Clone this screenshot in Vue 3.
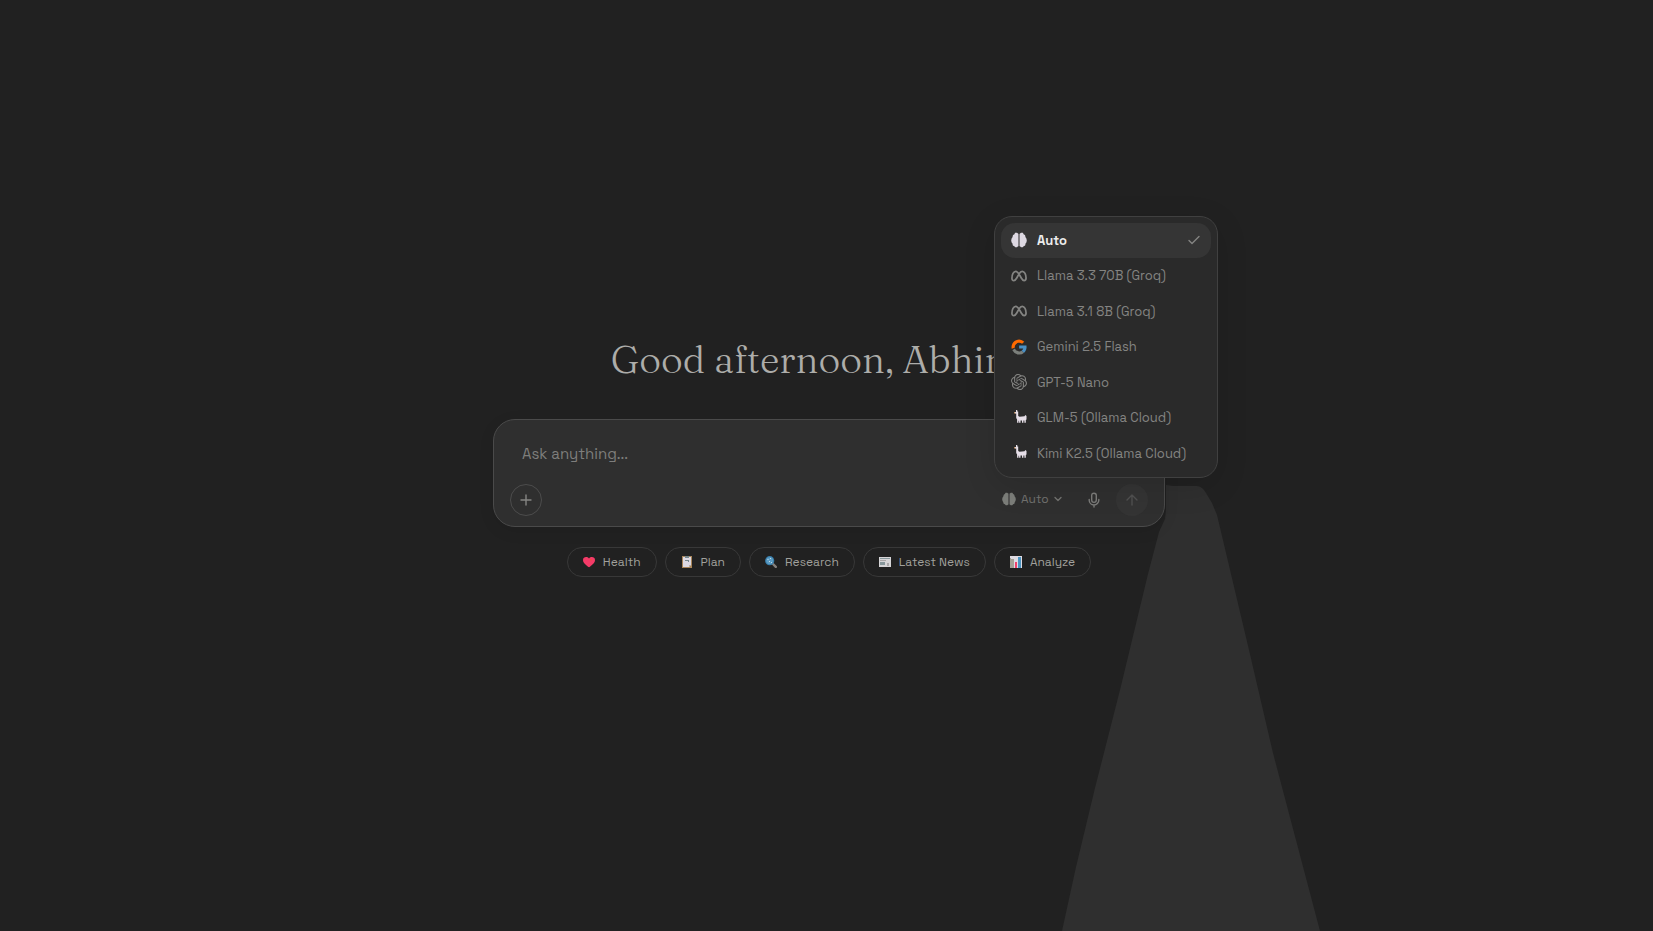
<template>
  <main class="page">
    <!-- icon sprite -->
    <svg class="sprite" aria-hidden="true">
      <symbol id="i-brain" viewBox="0 0 24 24">
        <path d="M10.500 2.400L9 1.200H6.200L4.800 3.600 3 4.600 2.200 7.800.900 9.600.300 12.600.900 15.600 2 17 2.800 20.200 5 21.200 6.400 22.800H9L10.500 21.400z" />
        <path d="M13.500 2.400L15 1.200H17.800L19.200 3.600 21 4.600 21.800 7.800 23.100 9.600 23.700 12.600 23.100 15.600 22 17 21.200 20.200 19 21.200 17.600 22.800H15L13.500 21.400z" />
        <path fill-opacity="0.45" d="M10.500 2.500h3v19h-3z" />
      </symbol>
      <symbol id="i-meta" viewBox="0 0 24 24">
        <path fill="none" stroke="currentColor" stroke-width="2.600" d="M4.400 18.900c-2 0-3-1.300-3-3.700C1.400 9.900 3.700 4.900 7.100 4.900c2 0 3.400 1.500 4.900 4.100l3.400 6c1.400 2.500 2.400 3.900 4.200 3.900 2 0 3-1.400 3-3.900 0-5.200-2.300-10.100-5.700-10.100-2 0-3.500 1.600-4.900 4.100l-3.400 6c-1.400 2.500-2.500 3.900-4.200 3.900z" />
      </symbol>
      <symbol id="i-google" viewBox="0 0 24 24">
        <path fill="#ff6a00" d="M2 7.100A11.300 11.300 0 0 1 19.900 4L16.600 7.200A6.700 6.700 0 0 0 6 9.900L5.500 13 1 14.500A11.300 11.300 0 0 1 2 7.100z" />
        <path fill="#7b7f7b" d="M2 17A11.300 11.300 0 0 0 19.700 20.500L15.900 17.500A6.800 6.800 0 0 1 5.900 14.100z" />
        <path fill="#4a90c4" d="M12.200 9.900H23.200C23.900 14.500 22.600 18 19.700 20.500L15.900 17.500C17.200 16.600 18 15.600 18.300 14.300H12.200z" />
      </symbol>
      <symbol id="i-openai" viewBox="0 0 24 24">
        <path d="M22.2819 9.8211a5.9847 5.9847 0 0 0-.5157-4.9108 6.0462 6.0462 0 0 0-6.5098-2.9A6.0651 6.0651 0 0 0 4.9807 4.1818a5.9847 5.9847 0 0 0-3.9977 2.9 6.0462 6.0462 0 0 0 .7427 7.0966 5.98 5.98 0 0 0 .511 4.9107 6.051 6.051 0 0 0 6.5146 2.9001A5.9847 5.9847 0 0 0 13.2599 24a6.0557 6.0557 0 0 0 5.7718-4.2058 5.9894 5.9894 0 0 0 3.9977-2.9001 6.0557 6.0557 0 0 0-.7475-7.073zm-9.022 12.6081a4.4755 4.4755 0 0 1-2.8764-1.0408l.1419-.0804 4.7783-2.7582a.7948.7948 0 0 0 .3927-.6813v-6.7369l2.02 1.1686a.071.071 0 0 1 .038.052v5.5826a4.504 4.504 0 0 1-4.4945 4.4944zm-9.6607-4.1254a4.4708 4.4708 0 0 1-.5346-3.0137l.142.0852 4.783 2.7582a.7712.7712 0 0 0 .7806 0l5.8428-3.3685v2.3324a.0804.0804 0 0 1-.0332.0615L9.74 19.9502a4.4992 4.4992 0 0 1-6.1408-1.6464zM2.3408 7.8956a4.485 4.485 0 0 1 2.3655-1.9728V11.6a.7664.7664 0 0 0 .3879.6765l5.8144 3.3543-2.0201 1.1685a.0757.0757 0 0 1-.071 0l-4.8303-2.7865A4.504 4.504 0 0 1 2.3408 7.872zm16.5963 3.8558L13.1038 8.364 15.1192 7.2a.0757.0757 0 0 1 .071 0l4.8303 2.7913a4.4944 4.4944 0 0 1-.6765 8.1042v-5.6772a.79.79 0 0 0-.407-.667zm2.0107-3.0231l-.142-.0852-4.7735-2.7818a.7759.7759 0 0 0-.7854 0L9.409 9.2297V6.8974a.0662.0662 0 0 1 .0284-.0615l4.8303-2.7866a4.4992 4.4992 0 0 1 6.6802 4.66zM8.3065 12.863l-2.02-1.1638a.0804.0804 0 0 1-.038-.0567V6.0742a4.4992 4.4992 0 0 1 7.3757-3.4537l-.142.0805L8.704 5.459a.7948.7948 0 0 0-.3927.6813zm1.0976-2.3654l2.602-1.4998 2.6069 1.4998v2.9994l-2.5974 1.4997-2.6067-1.4997Z" />
      </symbol>
      <symbol id="i-llama" viewBox="0 0 16 16">
        <path fill="#b98a5e" d="M3 2h2.500v1.500H3z" />
        <path fill="#e6dfe8" d="M5 0H6.300V1.500H7.200V6L8.500 6.700 13.500 6.300 14.300 5 15.500 6V9.500L14.800 10V12.800H13.400V10.500H12.400V12.800H11V10.500H9.500V12.800H8.100V10.800H7.500V12.800H6.100V9.500L5.200 8V3.500H4.200V2H5z" />
      </symbol>
      <symbol id="i-heart" viewBox="0 0 12 12">
        <path fill="#f43b68" d="M6 11.300C3.500 9.300 0 7 0 3.900 0 .900 4 .100 6 2.400 8 .100 12 .900 12 3.900 12 7 8.500 9.300 6 11.300z" />
        <path fill="#ef5238" d="M7 3h1.500v1.500H7z" />
      </symbol>
      <symbol id="i-clipboard" viewBox="0 0 12 12">
        <path fill="#a88559" d="M1 0h10v12H1z" />
        <path fill="#ddd9e3" d="M2 1h8v8l-2 2H2z" />
        <path fill="#77878c" d="M4 0h4v2H4zM4 4h4v1H4zM7 5h1v1H7z" />
        <path fill="#b5b1ad" d="M8 9h2l-2 2z" />
      </symbol>
      <symbol id="i-magnifier" viewBox="0 0 12 12">
        <path stroke="#85817d" stroke-width="2.400" stroke-linecap="round" d="M8 8l2.800 2.800" />
        <circle cx="4.700" cy="4.700" r="4.600" fill="#397fac" />
        <circle cx="4.700" cy="4.700" r="3.400" fill="#5b9cc4" />
        <path fill="#c3dbe7" d="M2.500 3h1v1h-1zM5 2h1v1H5zM4 5h1v1H4zM6 6h1v1H6z" />
      </symbol>
      <symbol id="i-news" viewBox="0 0 12 12">
        <path fill="#d6d5d7" d="M0 1h12v10H0z" />
        <path fill="#87979b" d="M1 2h10v1H1zM1 6h5v3H1z" />
        <path fill="#aaa8a9" d="M1 4h6v1H1zM8 7h2v3H8z" />
      </symbol>
      <symbol id="i-chart" viewBox="0 0 12 12">
        <path fill="#dedbe3" d="M0 0h12v12H0z" />
        <path fill="#a4a196" d="M0 2h1v10H0zM1 3h3v9H1z" />
        <path fill="#f0406c" d="M5 6h2v6H5z" />
        <path fill="#4c94c0" d="M8 1h3v11H8z" />
      </symbol>
    </svg>

    <svg class="beam" viewBox="0 0 258 446" aria-hidden="true">
      <path d="M104 0L112 1 135 1Q141 2 144 8L150 18 155 30 160 51 187 165 211 268 258 446H0L14 382 33 303 58 205 86 89 97 47 103 34 104 24z" />
    </svg>

    <h1 class="greeting">Good afternoon, {{ userName }}</h1>

    <form class="composer" @submit.prevent="send">
      <textarea v-model="message" rows="1" placeholder="Ask anything..." aria-label="Ask anything"></textarea>
      <div class="toolbar">
        <button type="button" class="round attach" aria-label="Add attachment">
          <svg width="16" height="16" viewBox="0 0 16 16"><path d="M8 3v10M3 8h10" /></svg>
        </button>

        <div class="tools">
          <div class="picker">
            <button type="button" class="picker-btn" aria-haspopup="listbox" :aria-expanded="open" @click="open = !open">
              <svg class="brain" width="14" height="14"><use href="#i-brain" /></svg>
              <span>{{ selected.short || selected.name }}</span>
              <svg class="chevron" width="8" height="8" viewBox="0 0 8 8"><path d="M1 2.500l3 3 3-3" /></svg>
            </button>

            <ul v-if="open" class="menu" role="listbox" aria-label="Model">
              <li v-for="m in models" :key="m.id">
                <button
                  type="button"
                  class="option"
                  role="option"
                  :class="{ active: m.id === selectedId }"
                  :aria-selected="m.id === selectedId"
                  @click="pick(m)"
                >
                  <svg class="option-icon" width="16" height="16"><use :href="'#i-' + m.icon" /></svg>
                  <span>{{ m.name }}</span>
                  <svg v-if="m.id === selectedId" class="check" width="14" height="14" viewBox="0 0 14 14">
                    <path d="M2 7.500l3 3L12 3.500" />
                  </svg>
                </button>
              </li>
            </ul>
          </div>

          <button type="button" class="round mic" aria-label="Voice input">
            <svg width="16" height="16" viewBox="0 0 16 16">
              <path d="M8 1.200a2.300 2.300 0 0 0-2.300 2.300v4.600a2.300 2.300 0 0 0 4.600 0V3.500A2.300 2.300 0 0 0 8 1.200zM3.200 7.500v.700a4.800 4.800 0 0 0 9.600 0v-.700M8 13v2" />
            </svg>
          </button>
          <button type="submit" class="round send" aria-label="Send message">
            <svg width="16" height="16" viewBox="0 0 16 16"><path d="M8 13v-10M3 8l5-5 5 5" /></svg>
          </button>
        </div>
      </div>
    </form>

    <div class="chips">
      <button v-for="s in suggestions" :key="s.label" type="button" class="chip" @click="message = s.label">
        <svg width="12" height="12"><use :href="'#i-' + s.icon" /></svg>
        {{ s.label }}
      </button>
    </div>
  </main>
</template>

<script setup>
import { ref, computed } from 'vue';

const userName = 'Abhinav';
const message = ref('');
const open = ref(true);
const selectedId = ref('auto');

const models = [
  { id: 'auto', name: 'Auto', icon: 'brain' },
  { id: 'llama-70b', name: 'Llama 3.3 70B (Groq)', short: 'Llama', icon: 'meta' },
  { id: 'llama-8b', name: 'Llama 3.1 8B (Groq)', short: 'Llama', icon: 'meta' },
  { id: 'gemini', name: 'Gemini 2.5 Flash', short: 'Gemini', icon: 'google' },
  { id: 'gpt', name: 'GPT-5 Nano', short: 'GPT-5', icon: 'openai' },
  { id: 'glm', name: 'GLM-5 (Ollama Cloud)', short: 'GLM-5', icon: 'llama' },
  { id: 'kimi', name: 'Kimi K2.5 (Ollama Cloud)', short: 'Kimi', icon: 'llama' }
];

const suggestions = [
  { label: 'Health', icon: 'heart' },
  { label: 'Plan', icon: 'clipboard' },
  { label: 'Research', icon: 'magnifier' },
  { label: 'Latest News', icon: 'news' },
  { label: 'Analyze', icon: 'chart' }
];

const selected = computed(() => models.find((m) => m.id === selectedId.value));

function pick(m) {
  selectedId.value = m.id;
  open.value = false;
}

function send() {
  message.value = '';
}
</script>

<style>
body {
  background: #212121;
}
</style>

<style scoped>
.page {
  position: relative;
  box-sizing: border-box;
  min-height: 100vh;
  padding: 0 0 18px 5px;
  display: flex;
  flex-direction: column;
  align-items: center;
  justify-content: center;
  overflow: hidden;
  background: #212121;
  color: #a8a8a4;
  font-family: 'Space Grotesk', Inter, 'Liberation Sans', sans-serif;
}

.sprite {
  position: absolute;
  width: 0;
  height: 0;
}

/* light beam behind the composer */
.beam {
  position: absolute;
  left: calc(50% + 235px);
  bottom: 0;
  width: 258px;
  height: 446px;
  fill: #2f2f2f;
}

button {
  margin: 0;
  padding: 0;
  border: none;
  background: none;
  color: inherit;
  font: inherit;
  cursor: pointer;
}

.greeting {
  margin: 0 0 35px;
  font-family: Fraunces, 'Liberation Serif', serif;
  font-size: 38px;
  font-weight: 300;
  line-height: 48px;
  color: #adadaa;
}

/* composer */
.composer {
  position: relative;
  box-sizing: border-box;
  width: 100%;
  max-width: 672px;
  padding: 20px 16px 10px;
  border: 1px solid #4a4a4a;
  border-radius: 22px;
  background: #2f2f2f;
  box-shadow: 0 4px 16px rgba(0, 0, 0, 0.08);
}

.composer textarea {
  display: block;
  box-sizing: border-box;
  width: 100%;
  height: 44px;
  padding: 2px 12px;
  border: none;
  outline: none;
  resize: none;
  background: transparent;
  color: #d8d8d4;
  font: inherit;
  font-size: 15px;
  line-height: 24px;
}

.composer textarea::placeholder {
  color: #7e7e7c;
  opacity: 1;
}

.toolbar,
.tools {
  display: flex;
  align-items: center;
}

.toolbar {
  justify-content: space-between;
}

.tools {
  gap: 6px;
}

.round {
  box-sizing: border-box;
  width: 32px;
  height: 32px;
  border-radius: 50%;
  display: flex;
  align-items: center;
  justify-content: center;
}

.round svg,
.chevron,
.check {
  fill: none;
  stroke: currentColor;
  stroke-width: 1.4;
  stroke-linecap: round;
  stroke-linejoin: round;
}

.attach {
  border: 1px solid #4c4c4c;
  color: #858583;
}

.mic {
  color: #7c7c7a;
}

.send {
  background: #343434;
  color: #505050;
}

/* model picker */
.picker {
  position: relative;
}

.picker-btn {
  height: 30px;
  min-width: 78px;
  padding: 0 8px 2px;
  display: flex;
  align-items: center;
  gap: 5px;
  font-size: 12px;
  color: #72726f;
}

.brain {
  fill: #7c7e7a;
}

.menu {
  position: absolute;
  left: 0;
  bottom: calc(100% + 7px);
  z-index: 10;
  box-sizing: border-box;
  width: 224px;
  margin: 0;
  padding: 6px;
  list-style: none;
  border: 1px solid #404040;
  border-radius: 18px;
  background: #2a2a2a;
  box-shadow: 0 8px 32px rgba(0, 0, 0, 0.12);
}

.option {
  box-sizing: border-box;
  width: 100%;
  padding: 8px 10px;
  display: flex;
  align-items: center;
  gap: 10px;
  border-radius: 14px;
  font-size: 13px;
  line-height: 1.5;
  color: #848482;
  text-align: left;
}

.option.active {
  background: #353535;
  color: #ececec;
  font-weight: 600;
}

.option-icon {
  flex: none;
  fill: currentColor;
}

.option.active .option-icon {
  fill: #ddd8e2;
}

.check {
  margin-left: auto;
  color: #848482;
}

/* suggestions */
.chips {
  position: relative;
  margin-top: 20px;
  display: flex;
  flex-wrap: wrap;
  justify-content: center;
  gap: 8px;
}

.chip {
  height: 30px;
  padding: 0 15px;
  display: flex;
  align-items: center;
  gap: 8px;
  border: 1px solid #383838;
  border-radius: 15px;
  font-size: 12px;
  color: #a0a09c;
}
</style>
